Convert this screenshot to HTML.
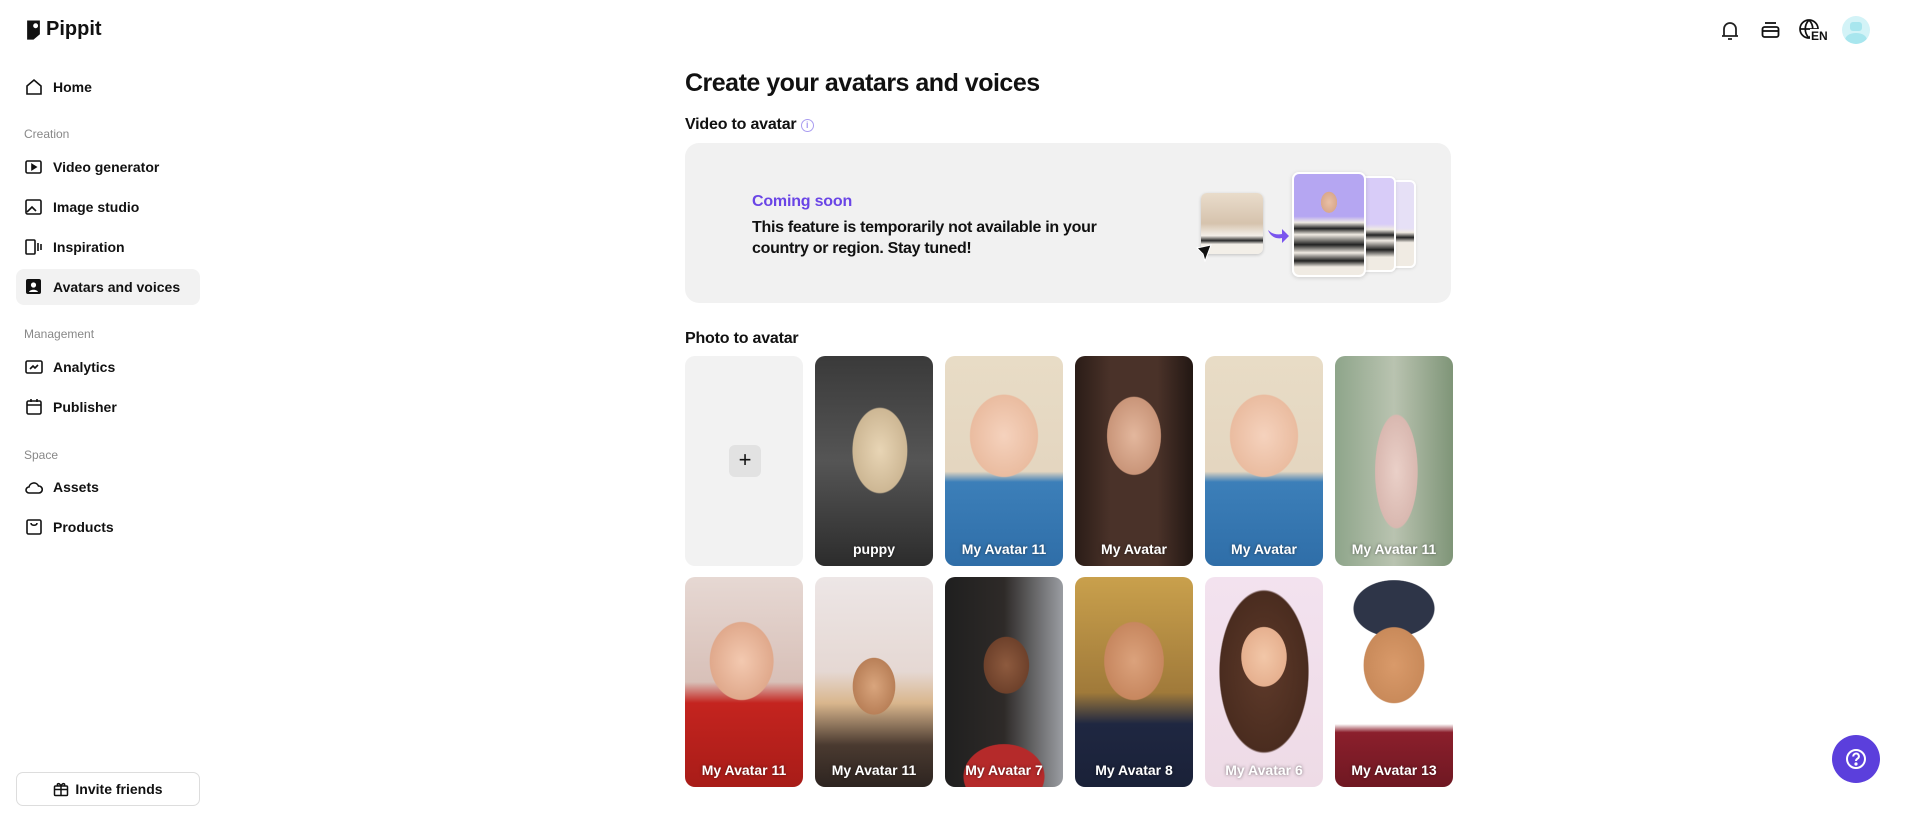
<!DOCTYPE html>
<html><head><meta charset="utf-8"><style>
*{box-sizing:border-box;margin:0;padding:0}
body{width:1911px;height:814px;background:#fff;font-family:"Liberation Sans",sans-serif;color:#111;position:relative;overflow:hidden}
.abs{position:absolute}
.nav{position:absolute;left:16px;width:184px;height:36px;display:flex;align-items:center;padding-left:9px;font-size:14px;font-weight:bold;border-radius:8px}
.nav svg{width:18px;height:18px;margin-right:10px;flex:none}
.sec{position:absolute;left:24px;font-size:12px;color:#888}
.card{position:absolute;width:118px;height:210px;border-radius:10px;overflow:hidden}
.card span{position:absolute;left:0;right:0;bottom:9px;text-align:center;color:#fff;font-weight:bold;font-size:14px;text-shadow:0 0 3px rgba(0,0,0,.5)}
</style></head><body>
<div class="abs" style="left:25px;top:18px;display:flex;align-items:center;font-weight:bold;font-size:20px">
<svg width="17" height="22" viewBox="0 0 16 20"><path d="M2 1h12v13l-6 5H2z" fill="#111"/><circle cx="10" cy="6" r="2.3" fill="#fff"/></svg>
<span style="margin-left:4px">Pippit</span></div>

<div class="nav" style="top:69px"><svg viewBox="0 0 18 18" fill="none" stroke="#111" stroke-width="1.6"><path d="M2 8l7-6 7 6v8H2z"/></svg>Home</div>
<div class="sec" style="top:127px">Creation</div>
<div class="nav" style="top:149px"><svg viewBox="0 0 18 18" fill="none" stroke="#111" stroke-width="1.6"><rect x="1" y="3" width="15" height="12" rx="1.5"/><path d="M7 6.5l4 2.5-4 2.5z" fill="#111"/></svg>Video generator</div>
<div class="nav" style="top:189px"><svg viewBox="0 0 18 18" fill="none" stroke="#111" stroke-width="1.6"><rect x="1" y="2" width="15" height="14" rx="1.5"/><path d="M2 14l5-5 4 4"/></svg>Image studio</div>
<div class="nav" style="top:229px"><svg viewBox="0 0 18 18" fill="none" stroke="#111" stroke-width="1.6"><rect x="1" y="2" width="9" height="14" rx="1"/><path d="M13 5v8M16 6v6"/></svg>Inspiration</div>
<div class="nav" style="top:269px;background:#f2f2f2"><svg viewBox="0 0 18 18"><rect x="1" y="1" width="15" height="15" rx="2" fill="#111"/><circle cx="8.5" cy="7" r="2.6" fill="#fff"/><path d="M4 14c1-3 8-3 9 0" fill="#fff"/></svg>Avatars and voices</div>
<div class="sec" style="top:327px">Management</div>
<div class="nav" style="top:349px"><svg viewBox="0 0 18 18" fill="none" stroke="#111" stroke-width="1.6"><rect x="1" y="3" width="16" height="12" rx="1.5"/><path d="M5 11l3-3 2 2 3-3"/></svg>Analytics</div>
<div class="nav" style="top:389px"><svg viewBox="0 0 18 18" fill="none" stroke="#111" stroke-width="1.6"><rect x="2" y="3" width="14" height="13" rx="1.5"/><path d="M2 7h14M6 1v3M12 1v3"/></svg>Publisher</div>
<div class="sec" style="top:448px">Space</div>
<div class="nav" style="top:469px"><svg viewBox="0 0 18 18" fill="none" stroke="#111" stroke-width="1.6"><path d="M4 15a3 3 0 010-6 5 5 0 019.5-1A3.5 3.5 0 0114 15z"/></svg>Assets</div>
<div class="nav" style="top:509px"><svg viewBox="0 0 18 18" fill="none" stroke="#111" stroke-width="1.6"><rect x="2" y="2" width="14" height="14" rx="1.5"/><path d="M6 5c0 3 6 3 6 0"/></svg>Products</div>

<div class="abs" style="left:16px;top:772px;width:184px;height:34px;border:1px solid #ddd;border-radius:7px;display:flex;align-items:center;justify-content:center;font-weight:bold;font-size:14px">
<svg width="16" height="16" viewBox="0 0 16 16" fill="none" stroke="#111" stroke-width="1.5" style="margin-right:6px"><rect x="1.5" y="5" width="13" height="9.5" rx="1"/><path d="M1.5 8.5h13M8 5v9.5M8 5C6 1 3 3 5 5M8 5c2-4 5-2 3 0"/></svg>Invite friends</div>

<svg class="abs" style="left:1720px;top:20px" width="20" height="22" viewBox="0 0 20 22" fill="none" stroke="#222" stroke-width="1.8"><path d="M4 16V9a6 6 0 0112 0v7M2 16h16M8 19h4"/></svg>
<svg class="abs" style="left:1761px;top:21px" width="19" height="18" viewBox="0 0 19 18" fill="none" stroke="#111" stroke-width="1.8"><path d="M4 2h11"/><rect x="1.5" y="6" width="16" height="10" rx="2"/><path d="M1.5 10h16"/></svg>
<div class="abs" style="left:1798px;top:18px;width:32px;height:26px">
<svg width="22" height="22" viewBox="0 0 22 22" fill="none" stroke="#111" stroke-width="1.7"><circle cx="11" cy="11" r="9"/><path d="M2 11h18M11 2c-5 5-5 13 0 18M11 2c5 5 5 13 0 18"/></svg>
<span class="abs" style="left:12px;top:11px;font-weight:bold;font-size:12px;background:#fff;padding:0 1px">EN</span></div>
<div class="abs" style="left:1842px;top:16px;width:28px;height:28px;border-radius:50%;background:#d3f3f7;overflow:hidden"><div class="abs" style="left:8px;top:6px;width:12px;height:9px;background:#a8e6ee;border-radius:3px"></div><div class="abs" style="left:3px;top:17px;width:22px;height:14px;background:#a8e6ee;border-radius:50%"></div></div>

<div class="abs" style="left:685px;top:69px;font-size:25px;font-weight:bold;letter-spacing:-.5px">Create your avatars and voices</div>
<div class="abs" style="left:685px;top:116px;font-size:16px;font-weight:bold;letter-spacing:-.2px">Video to avatar <span style="display:inline-block;width:13px;height:13px;border:1px solid #a99cf0;border-radius:50%;color:#a99cf0;font-size:9px;text-align:center;line-height:11px;vertical-align:1px">i</span></div>
<div class="abs" style="left:685px;top:143px;width:766px;height:160px;background:#f1f1f1;border-radius:14px"></div>
<div class="abs" style="left:752px;top:193px;font-size:16px;font-weight:bold;color:#6a45e6;letter-spacing:-.2px">Coming soon</div>
<div class="abs" style="left:752px;top:217px;font-size:16px;font-weight:bold;line-height:21px;width:380px;letter-spacing:-.3px">This feature is temporarily not available in your country or region. Stay tuned!</div>
<div class="abs" style="left:1201px;top:193px;width:62px;height:61px;border-radius:6px;background:linear-gradient(#e9dccb,#d6c3ad 50%,#f3efe8 70%,#2a2a2a 78%,#f3efe8 84%);box-shadow:0 1px 3px rgba(0,0,0,.2)"></div>
<svg class="abs" style="left:1196px;top:244px" width="16" height="18" viewBox="0 0 16 18"><path d="M1 4l14-3-6 16-2-7z" fill="#111" stroke="#fff" stroke-width="1"/></svg>
<svg class="abs" style="left:1266px;top:226px" width="24" height="20" viewBox="0 0 24 20"><path d="M2 4c3 8 10 9 14 8v5l7-7-7-7v5C11 9 6 8 2 4z" fill="#7a55ee"/></svg>
<div class="abs" style="left:1388px;top:180px;width:28px;height:88px;border-radius:6px;background:linear-gradient(#e6e0f6,#e6e0f6 55%,#f0ebe3 60%,#222 66%,#f0ebe3 72%);border:2px solid #fff;box-shadow:0 1px 3px rgba(0,0,0,.1)"></div>
<div class="abs" style="left:1350px;top:176px;width:46px;height:96px;border-radius:6px;background:linear-gradient(#d8ccf8,#d8ccf8 50%,#f0ebe3 56%,#222 62%,#f0ebe3 68%,#222 78%,#f0ebe3 86%);border:2px solid #fff;box-shadow:0 1px 3px rgba(0,0,0,.1)"></div>
<div class="abs" style="left:1292px;top:172px;width:74px;height:105px;border-radius:7px;background:radial-gradient(ellipse 10px 13px at 50% 28%,#e9c0a6,#d9a88c 80%,transparent 82%),linear-gradient(#b5a6f2,#b5a6f2 42%,#f0ebe3 48%,#222 54%,#f0ebe3 60%,#222 70%,#f0ebe3 78%,#222 86%,#f0ebe3 92%);border:2px solid #fff;box-shadow:0 1px 4px rgba(0,0,0,.15)"></div>

<div class="abs" style="left:685px;top:330px;font-size:16px;font-weight:bold;letter-spacing:-.2px">Photo to avatar</div>

<div class="card" style="left:685px;top:356px;background:#f2f2f2"><div class="abs" style="left:44px;top:89px;width:32px;height:32px;background:#e2e2e2;border-radius:6px;text-align:center;line-height:30px;font-size:22px">+</div></div>
<div class="card" style="left:815px;top:356px;background:radial-gradient(ellipse 45px 70px at 55% 45%,#e8d5b5,#cdb794 60%,transparent 62%),linear-gradient(#3a3a3a,#555 50%,#2c2c2c)"><span>puppy</span></div>
<div class="card" style="left:945px;top:356px;background:radial-gradient(ellipse 48px 58px at 50% 38%,#f5d2bd,#eabca0 70%,transparent 72%),linear-gradient(#e8dcc6 0%,#e4d6c0 55%,#3c7fb9 60%,#2f6ea8 100%)"><span>My Avatar 11</span></div>
<div class="card" style="left:1075px;top:356px;background:radial-gradient(ellipse 38px 55px at 50% 38%,#e3b79d,#c99579 70%,transparent 72%),linear-gradient(90deg,#2a1c17,#4a3229 30%,#4a3229 70%,#221713)"><span>My Avatar</span></div>
<div class="card" style="left:1205px;top:356px;background:radial-gradient(ellipse 48px 58px at 50% 38%,#f5d2bd,#eabca0 70%,transparent 72%),linear-gradient(#e8dcc6 0%,#e4d6c0 55%,#3c7fb9 60%,#2f6ea8 100%)"><span>My Avatar</span></div>
<div class="card" style="left:1335px;top:356px;background:radial-gradient(ellipse 30px 80px at 52% 55%,#ead0c8,#d9b8b0 70%,transparent 72%),linear-gradient(90deg,#8ea58a,#b9c3b0 50%,#7f9578)"><span>My Avatar 11</span></div>

<div class="card" style="left:685px;top:577px;background:radial-gradient(ellipse 45px 55px at 48% 40%,#f3c9b0,#e0a98c 70%,transparent 72%),linear-gradient(#e6d8d3,#d8c0b8 50%,#c4241f 60%,#a81c18)"><span>My Avatar 11</span></div>
<div class="card" style="left:815px;top:577px;background:radial-gradient(ellipse 30px 40px at 50% 52%,#d9a57d,#b98058 70%,transparent 72%),linear-gradient(#ede6e6,#e5d8d3 45%,#d9b68d 60%,#4a3a30 80%,#2d2420)"><span>My Avatar 11</span></div>
<div class="card" style="left:945px;top:577px;background:radial-gradient(ellipse 32px 40px at 52% 42%,#8d5a3e,#6e412b 70%,transparent 72%),radial-gradient(ellipse 50px 40px at 50% 95%,#b52a2a,#b52a2a 80%,transparent 82%),linear-gradient(90deg,#1f1f1f,#2e2a28 50%,#9a9da2)"><span>My Avatar 7</span></div>
<div class="card" style="left:1075px;top:577px;background:radial-gradient(ellipse 42px 55px at 50% 40%,#dba27c,#c7875f 70%,transparent 72%),linear-gradient(#c9a04c,#a07a3a 55%,#1f2741 70%,#1a2138)"><span>My Avatar 8</span></div>
<div class="card" style="left:1205px;top:577px;background:radial-gradient(ellipse 32px 42px at 50% 38%,#f2c7a8,#e6b08f 70%,transparent 72%),radial-gradient(ellipse 55px 100px at 50% 45%,#5e3a2a,#4a2c1f 80%,transparent 82%),linear-gradient(#f3e2ef,#eedbe6)"><span>My Avatar 6</span></div>
<div class="card" style="left:1335px;top:577px;background:radial-gradient(ellipse 40px 50px at 50% 42%,#d99a6a,#c98a5a 75%,transparent 77%),radial-gradient(ellipse 50px 35px at 50% 15%,#2e3548,#2e3548 80%,transparent 82%),linear-gradient(#fff,#fff 70%,#8b1f2c 74%,#6f1822)"><span>My Avatar 13</span></div>

<div class="abs" style="left:1832px;top:735px;width:48px;height:48px;border-radius:50%;background:#5b3fdc">
<svg class="abs" style="left:13px;top:13px" width="22" height="22" viewBox="0 0 22 22" fill="none" stroke="#fff" stroke-width="2"><circle cx="11" cy="11" r="9"/><path d="M8.3 8.5a2.8 2.8 0 115 1.5c-1 .9-2.3 1.3-2.3 3"/><circle cx="11" cy="16" r=".6" fill="#fff"/></svg></div>
</body></html>
